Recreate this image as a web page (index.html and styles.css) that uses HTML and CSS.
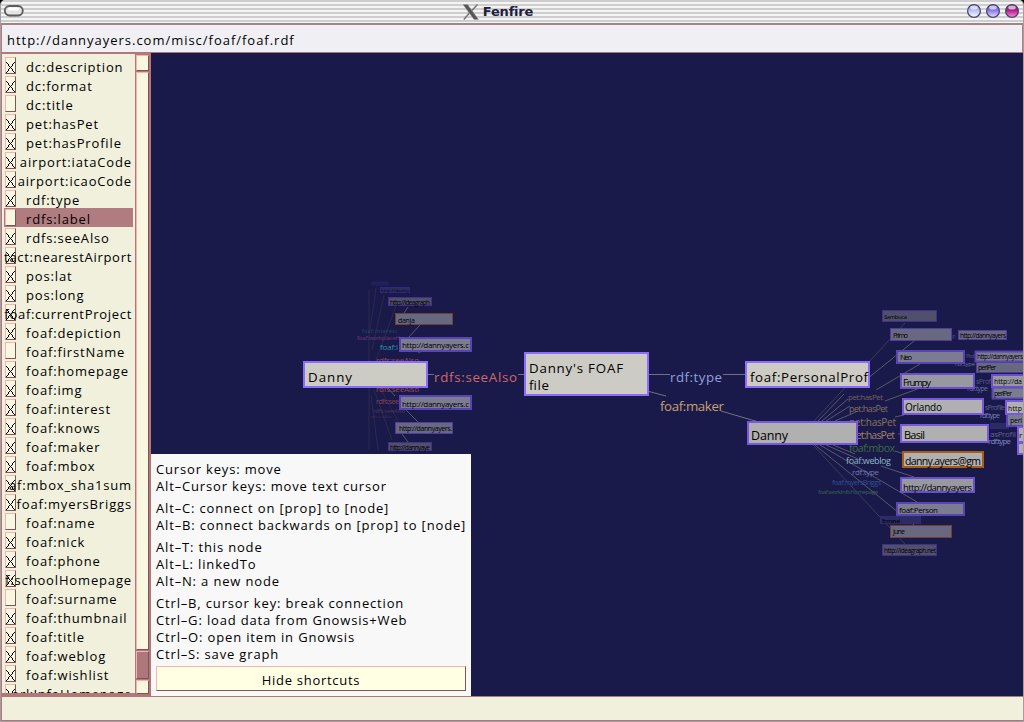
FILE: index.html
```html
<!DOCTYPE html>
<html lang="en">
<head>
<meta charset="utf-8">
<title>Fenfire</title>
<link rel="stylesheet" href="styles.css">
</head>
<body>
<div class="window">
<header class="titlebar">
  <svg class="pill" width="22" height="14" viewBox="0 0 22 14"><rect x="1.8" y="2" width="18" height="9.500" rx="4.700" fill="#e4e4e4" stroke="#5c5c5c" stroke-width="1.8"/><rect x="5" y="3.500" width="11" height="3" rx="1.5" fill="#fff"/></svg>
  <div class="caption">
    <svg width="16" height="16" viewBox="0 0 16 16"><path d="M0 .5H4.5L15.5 15.500H11Z" fill="#555" stroke="#999" stroke-width=".5"/><path d="M14.500 .5L8.500 7M6.500 9L.8 15.500" stroke="#777" stroke-width="1.5"/></svg>
    <h1>Fenfire</h1>
  </div>
  <svg class="orbs" width="56" height="18" viewBox="0 0 56 18">
    <defs>
      <linearGradient id="o1" x2="0" y2="1"><stop offset="0" stop-color="#8080cc"/><stop offset=".5" stop-color="#bcc4ff"/><stop offset="1" stop-color="#fff"/></linearGradient>
      <linearGradient id="o2" x2="0" y2="1"><stop offset="0" stop-color="#5848b0"/><stop offset=".5" stop-color="#9080f0"/><stop offset="1" stop-color="#e8e4ff"/></linearGradient>
      <linearGradient id="o3" x2="0" y2="1"><stop offset="0" stop-color="#701060"/><stop offset=".5" stop-color="#b42890"/><stop offset="1" stop-color="#ff90e0"/></linearGradient>
    </defs>
    <g stroke="#444466" stroke-width="1.200"><circle cx="8" cy="9" r="6.400" fill="url(#o1)"/><circle cx="27" cy="9" r="6.400" fill="url(#o2)"/><circle cx="46" cy="9" r="6.400" fill="url(#o3)"/></g>
    <g fill="#fff" opacity=".65"><ellipse cx="8" cy="5.600" rx="3.800" ry="2"/><ellipse cx="27" cy="5.600" rx="3.800" ry="2"/><ellipse cx="46" cy="5.600" rx="3.800" ry="2"/></g>
  </svg>
</header>
<div class="address">http://dannyayers.com/misc/foaf/foaf.rdf</div>
<main class="main">
  <aside class="sidebar">
    <ul class="props">
      <li class="on"><i></i><span>dc:description</span></li>
      <li class="on"><i></i><span>dc:format</span></li>
      <li><i></i><span>dc:title</span></li>
      <li class="on"><i></i><span>pet:hasPet</span></li>
      <li class="on"><i></i><span>pet:hasProfile</span></li>
      <li class="on long"><i></i><span>airport:iataCode</span></li>
      <li class="on long"><i></i><span>airport:icaoCode</span></li>
      <li class="on"><i></i><span>rdf:type</span></li>
      <li class="selected"><i></i><span>rdfs:label</span></li>
      <li class="on"><i></i><span>rdfs:seeAlso</span></li>
      <li class="on long tight"><i></i><span>tact:nearestAirport</span></li>
      <li class="on"><i></i><span>pos:lat</span></li>
      <li class="on"><i></i><span>pos:long</span></li>
      <li class="on long tight"><i></i><span>foaf:currentProject</span></li>
      <li class="on"><i></i><span>foaf:depiction</span></li>
      <li><i></i><span>foaf:firstName</span></li>
      <li class="on"><i></i><span>foaf:homepage</span></li>
      <li class="on"><i></i><span>foaf:img</span></li>
      <li class="on"><i></i><span>foaf:interest</span></li>
      <li class="on"><i></i><span>foaf:knows</span></li>
      <li class="on"><i></i><span>foaf:maker</span></li>
      <li class="on"><i></i><span>foaf:mbox</span></li>
      <li class="on long"><i></i><span>af:mbox_sha1sum</span></li>
      <li class="on long"><i></i><span>foaf:myersBriggs</span></li>
      <li><i></i><span>foaf:name</span></li>
      <li class="on"><i></i><span>foaf:nick</span></li>
      <li class="on"><i></i><span>foaf:phone</span></li>
      <li class="on long"><i></i><span>f:schoolHomepage</span></li>
      <li><i></i><span>foaf:surname</span></li>
      <li class="on"><i></i><span>foaf:thumbnail</span></li>
      <li class="on"><i></i><span>foaf:title</span></li>
      <li class="on"><i></i><span>foaf:weblog</span></li>
      <li class="on"><i></i><span>foaf:wishlist</span></li>
      <li class="on long tight"><i></i><span>orkInfoHomepage</span></li>
    </ul>
    <div class="scroll"><b class="arrow"></b><b class="track"></b><b class="thumb"></b><b class="arrow end"></b></div>
  </aside>
  <section class="canvas">
    <svg class="graph" width="872" height="643" viewBox="151 53 872 643">
      <g class="edges faint">
        <path d="M369 290V450M376 288L370 330M384 295L372 350M396 306L376 360M371 395L378 450M374 390L392 440M380 388L400 425"/>
      </g>
      <g class="edges mid">
        <path d="M408 307L402 316M420 325L408 338M388 388L395 396M406 410L418 422M402 434L408 442M418 353L422 351"/>
        <path class="far" d="M814 421L905 323"/>
        <path d="M818 421L844 394M867 379L914 341M822 421L848 399M876 390L920 364M826 421L850 406M885 401L920 388M835 421L856 412M895 417L904 415M898 434H902"/>
        <path class="far" d="M813 445L905 544"/>
        <path d="M815 445L914 525M820 445L917 502M826 445L858 459M881 466L914 477M833 445L855 454M895 451L904 454"/>
      </g>
      <g class="edges"><path d="M428 374.500H434M518 374.500H525M649 374.500H670M723 374.500H746M649 391.500L666 396M721 411L757 421.500"/></g>

      <g class="label">
        <text x="434" y="381.500" textLength="83" fill="#d06868">rdfs:seeAlso</text>
        <text x="670" y="381.500" textLength="52" fill="#90a0dc">rdf:type</text>
        <text x="660" y="410.500" textLength="64" fill="#c8a070">foaf:maker</text>
      </g>

      <g class="tiny">
        <text x="362" y="333" font-size="5" textLength="35" fill="#286878" opacity=".7">foaf:interest</text>
        <text x="380" y="350" font-size="8" textLength="18" fill="#2898a8">foaf:i</text>
        <text x="357" y="340" font-size="6" textLength="43" fill="#703878">foaf:workplaceH</text>
        <text x="376" y="363" font-size="8" textLength="43" fill="#9c4854">rdfs:seeAlso</text>
        <text x="376" y="392" font-size="8" textLength="43" fill="#9c4854">rdfs:seeAlso</text>
        <text x="376" y="404" font-size="7" textLength="23" fill="#8c4054">rdfs:see</text>
        <text x="373" y="413" font-size="6" textLength="32" fill="#583454">rdfs:seeAlso</text>
        <text x="370" y="418" font-size="4" textLength="22" fill="#443050">rdfs:seeAlso</text>
        <text x="848" y="400" font-size="8" textLength="35" fill="#706060">pet:hasPet</text>
        <text x="849" y="412" font-size="9" textLength="39" fill="#84705f">pet:hasPet</text>
        <text x="849" y="425.500" font-size="10" textLength="47" fill="#8c745f">pet:hasPet</text>
        <text x="850" y="439" font-size="10.500" textLength="45" fill="#a08464">pet:hasPet</text>
        <text x="849" y="451.500" font-size="10.500" textLength="46" fill="#3c6c40">foaf:mbox</text>
        <text x="846" y="464" font-size="9" textLength="45" fill="#90b8c4">foaf:weblog</text>
        <text x="852" y="475" font-size="8" textLength="27" fill="#7078b4">rdf:type</text>
        <text x="832" y="485" font-size="7" textLength="49" fill="#305090">foaf:myersBriggs</text>
        <text x="818" y="494" font-size="6" textLength="60" fill="#386450">foaf:workInfoHomepage</text>
        <text x="952" y="339" font-size="6" fill="#484878">P</text>
        <text x="966" y="358" font-size="6" textLength="9" fill="#505080">Prof</text>
        <text x="955" y="366" font-size="6" textLength="20" fill="#6870a8">rdf:type</text>
        <text x="976" y="384" font-size="7" textLength="15" fill="#585888">sProf</text>
        <text x="967" y="391" font-size="7" textLength="21" fill="#6870a8">rdf:type</text>
        <text x="985" y="410" font-size="7" textLength="20" fill="#606090">sProfile</text>
        <text x="980" y="418" font-size="7" textLength="20" fill="#7880b8">rdf:type</text>
        <text x="990" y="437" font-size="8" textLength="26" fill="#606090">asProfil</text>
        <text x="988" y="444" font-size="8" textLength="23" fill="#8088c0">rdf:type</text>
      </g>

      <g class="node n0">
        <rect x="372" y="282" width="16" height="3" opacity=".4"/><rect x="380.500" y="287.500" width="29" height="5"/>
        <rect x="880.500" y="516.500" width="40" height="7"/><rect x="990.500" y="423.500" width="18" height="5"/>
        <text x="381" y="292" font-size="4" textLength="28">http://danny</text><text x="882" y="523" font-size="5" textLength="18">Emmanuel</text>
      </g>
      <g class="node n1">
        <rect x="388.500" y="297.500" width="43" height="8"/><text x="390" y="304.500" font-size="6.500" textLength="40">http://ideagraph</text>
        <rect x="388.500" y="442.500" width="43" height="8"/><text x="390" y="449.500" font-size="6.500" textLength="40">http://dannyaye</text>
        <rect x="882.500" y="310.500" width="54" height="11"/><text x="884" y="319" font-size="6" textLength="23">Sambuca</text>
        <rect x="882.500" y="544.500" width="54" height="11"/><text x="884" y="553" font-size="6.500" textLength="52">http://ideagraph.net</text>
      </g>
      <g class="node n2">
        <rect class="lit" x="395.500" y="313.500" width="57" height="11"/><text x="398" y="323" font-size="7" textLength="17">danja</text>
        <rect x="395.500" y="422.500" width="57" height="11"/><text x="399" y="431" font-size="7" textLength="53">http://dannyayers.</text>
        <rect x="890.500" y="328.500" width="61" height="12"/><text x="893" y="338" font-size="7" textLength="15">Primo</text>
        <rect class="lit" x="890.500" y="525.500" width="61" height="12"/><text x="893" y="534" font-size="7" textLength="12">june</text>
        <rect x="958.500" y="330.500" width="48" height="9"/><text x="960" y="338" font-size="6.500" textLength="46">http://dannyayers</text>
        <rect x="976.500" y="362.500" width="50" height="10"/><text x="978" y="370" font-size="7" textLength="18">perlPer</text>
      </g>
      <g class="node n3">
        <rect x="400" y="338" width="71" height="13"/><text x="402" y="348" font-size="8" textLength="67">http://dannyayers.c</text>
        <rect x="400" y="396" width="71" height="13"/><text x="402" y="407" font-size="8" textLength="67">http://dannyayers.c</text>
        <rect x="897" y="351" width="67" height="12"/><text x="900" y="360" font-size="8" textLength="12">Neo</text>
        <rect x="897" y="503" width="67" height="12"/><text x="899" y="513" font-size="8" textLength="39">foaf:Person</text>
        <rect x="975.500" y="351.500" width="50" height="10"/><text x="977" y="359" font-size="6.500" textLength="46">http://dannyayers</text>
        <rect x="992.500" y="387.500" width="40" height="11"/><text x="994" y="396" font-size="7" textLength="18">perlPer</text>
        <rect x="1007" y="414" width="40" height="12"/><text x="1010" y="423" font-size="7" textLength="12">perl</text>
      </g>
      <g class="node n4">
        <rect x="901" y="374" width="73" height="14"/><text x="903" y="385.500" font-size="9.500" textLength="28">Frumpy</text>
        <rect x="901" y="478" width="73" height="14"/><text x="903" y="490.500" font-size="9.500" textLength="69">http://dannyayers</text>
        <rect x="992" y="375" width="73" height="12"/><text x="994" y="384" font-size="7" textLength="28">http://da</text>
      </g>
      <g class="node n5">
        <rect x="903" y="399" width="80" height="15"/><text x="905" y="411" font-size="10" textLength="37">Orlando</text>
        <rect x="901" y="425" width="87" height="17"/><text x="904" y="438.500" font-size="11" textLength="21">Basil</text>
        <rect class="lit" x="903" y="452" width="80" height="15"/><text x="905" y="464.500" font-size="10.500" textLength="76">danny.ayers@gm</text>
        <rect x="1006" y="401" width="40" height="13"/><text x="1008" y="411" font-size="7" textLength="14">http</text>
        <rect x="1018" y="443" width="40" height="11"/><rect x="1018" y="427" width="40" height="15"/><text x="1019" y="438" font-size="8">r</text>
        <rect x="748" y="422" width="109" height="22"/><text x="751" y="439.500" font-size="12.500" textLength="37">Danny</text>
      </g>
      <g class="node n6">
        <rect x="304" y="362" width="123" height="25"/><text x="308" y="381.500" textLength="44">Danny</text>
        <rect x="525" y="353" width="123" height="42"/><text x="529" y="373" textLength="94">Danny's FOAF</text><text x="529" y="390" textLength="20">file</text>
        <rect x="746" y="362" width="123" height="25"/><text x="750" y="381.500" textLength="118">foaf:PersonalProf</text>
      </g>
    </svg>
    <div class="shortcuts">
      <p>Cursor keys: move<br>Alt–Cursor keys: move text cursor</p>
      <p>Alt–C: connect on [prop] to [node]<br>Alt–B: connect backwards on [prop] to [node]</p>
      <p>Alt–T: this node<br>Alt–L: linkedTo<br>Alt–N: a new node</p>
      <p>Ctrl–B, cursor key: break connection<br>Ctrl–G: load data from Gnowsis+Web<br>Ctrl–O: open item in Gnowsis<br>Ctrl–S: save graph</p>
      <button class="hide">Hide shortcuts</button>
    </div>
  </section>
</main>
<footer class="status"></footer>
</div>
</body>
</html>
```
FILE: styles.css
```css
* { box-sizing: border-box; }
body { margin: 0; background: #000; font: 13px/17px "Open Sans", "Noto Sans", sans-serif; letter-spacing: 0.85px; color: #000; }
.window { width: 1024px; height: 722px; display: flex; flex-direction: column; border: solid #a0a0a4; border-width: 0 1px 1px; border-radius: 5px 5px 0 0; overflow: hidden; background: #b07878; }
.titlebar { height: 24px; flex: none; display: flex; align-items: center; justify-content: space-between; border-bottom: 1px solid #8c8c8c; background: repeating-linear-gradient(#cecece 0 2px, #f4f4f4 2px 4px); }
.pill { margin: 0 34px 2px 2px; }
.orbs { margin: 0 1px 1px 0; }
.caption { display: flex; align-items: center; gap: 4px; margin-right: 29px; }
.caption h1 { margin: 0; font: bold 13px/18px "DejaVu Sans", sans-serif; letter-spacing: -0.2px; color: #20203c; }
.address { height: 29px; flex: none; border: 1px solid #b87c7c; border-bottom-color: #b07878; background: #f0f0f4; padding: 7px 5px 0; letter-spacing: 0.98px; }
.main { height: 643px; flex: none; display: flex; }
.sidebar { width: 149px; margin-left: 1px; display: flex; flex: none; background: #b07878; }
.props { list-style: none; margin: 1px 0 3px; padding: 2px 2px 0; width: 133px; height: 639px; background: #f0f0dc; overflow: hidden; display: flex; flex-direction: column; }
.props li { height: 19px; flex: none; display: flex; overflow: hidden; }
.props i { width: 11px; height: 17px; margin: 1px 0 0 1px; flex: none; border: 1px solid; border-color: #fcb0b0 #805454 #805454 #fcb0b0; background: #f8f8e0; }
.props .on i { background: linear-gradient(to bottom right, transparent 47%, #000 47% 53%, transparent 53%) 0 4px / 9px 11px no-repeat, linear-gradient(to bottom left, transparent 47%, #000 47% 53%, transparent 53%) 0 4px / 9px 11px no-repeat, #f8f8e0; }
.props span { margin: 3px 0 0 10px; line-height: 16px; white-space: nowrap; }
.props .long { display: grid; grid-template-columns: 128px; }
.props .long > * { grid-area: 1 / 1; }
.props .long span { margin-left: 0; justify-self: end; }
.props .tight span { letter-spacing: 0.7px; }
.props .selected { background: #b07c80; }
.scroll { width: 14px; display: flex; flex-direction: column; padding: 2px 0 2px 1px; gap: 1px; }
.scroll b { border: 1px solid; border-color: #fcb0b0 #805454 #805454 #fcb0b0; background: #f8f8e0; }
.arrow { height: 16px; }
.track { flex: 1; }
.thumb { height: 28px; }
.scroll .thumb { background: #ac787c; }
.arrow.end { height: 14px; }
.canvas { width: 872px; flex: none; position: relative; background: #1a1a4a; }
.graph { display: block; letter-spacing: 0; }
.graph text { white-space: pre; }
.edges path { fill: none; stroke: #707080; }
.edges.mid path { stroke: #58586c; }
.edges.mid .far { stroke: #3c3c5c; }
.edges.faint path { stroke: #29294f; }
.label, .n6 { font-size: 13.3px; }
.node rect { stroke-width: 2; }
.node text { fill: #000; }
.n0 rect { fill: #2c2c60; stroke: #30287a; stroke-width: 1; }
.n1 rect { fill: #50506c; stroke: #40308c; stroke-width: 1; }
.n2 rect { fill: #686880; stroke: #4c3ca4; stroke-width: 1; }
.n3 rect { fill: #7c7c90; stroke: #5844b4; }
.n4 rect { fill: #9898a0; stroke: #6850cc; }
.n5 rect { fill: #b0b0b0; stroke: #7858e0; }
.n6 rect { fill: #ccccc4; stroke: #8c6cff; }
.n2 .lit { stroke: #704030; }
.n5 .lit { stroke: #a85c14; }
.shortcuts { position: absolute; left: 0; bottom: 0; width: 320px; height: 242px; padding: 7px 5px 4px; background: #f8f8f8; display: flex; flex-direction: column; letter-spacing: 0.84px; }
.shortcuts p { margin: 0 0 5px; white-space: nowrap; }
.hide { height: 25px; margin-top: -2px; padding: 3px 0 0; border: 1px solid; border-color: #fcb0b0 #805454 #805454 #fcb0b0; background: #ffffe4; font: inherit; letter-spacing: 0.72px; color: #000; }
.status { flex: 1; margin: 1px 0 0; border: solid #b07878; border-width: 0 0 1px 1px; background: #f0f0dc; }
```
